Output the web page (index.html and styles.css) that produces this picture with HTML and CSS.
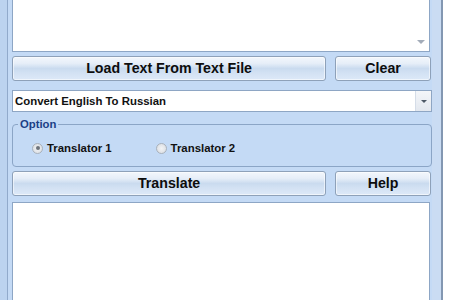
FILE: index.html
```html
<!DOCTYPE html>
<html>
<head>
<meta charset="utf-8">
<link rel="stylesheet" href="styles.css">
</head>
<body>
<div class="window">
  <div class="client">
    <div class="memo top-memo">
      <div class="memo-text"></div>
      <div class="vscroll"><span class="arrow-down"></span></div>
    </div>
    <div class="btn-row row-load">
      <button class="btn btn-wide">Load Text From Text File</button>
      <button class="btn btn-small">Clear</button>
    </div>
    <div class="combo">
      <span class="combo-text">Convert English To Russian</span>
      <span class="combo-btn"><span class="combo-arrow"></span></span>
    </div>
    <fieldset class="group">
      <legend>Option</legend>
      <div class="radios">
        <label class="radio checked"><span class="dot"></span>Translator 1</label>
        <label class="radio"><span class="dot"></span>Translator 2</label>
      </div>
    </fieldset>
    <div class="btn-row row-translate">
      <button class="btn btn-wide">Translate</button>
      <button class="btn btn-small">Help</button>
    </div>
    <div class="memo bottom-memo"></div>
  </div>
</div>
</body>
</html>
```
FILE: styles.css
```css
html, body {
  margin: 0;
  padding: 0;
  background: #ffffff;
  width: 450px;
  height: 300px;
  overflow: hidden;
}

.window {
  width: 443px;
  height: 300px;
  box-sizing: border-box;
  border-left: 7px solid #bcd3ef;
  border-right: 2px solid #8397b2;
  background: #cadcf3;
  display: flex;
}

.client {
  width: 425px;
  box-sizing: border-box;
  border-left: 1px solid #91aacb;
  background: #c4daf5;
  padding: 0 1px 0 4px;
  display: flex;
  flex-direction: column;
  font-family: "Liberation Sans", Arial, sans-serif;
  font-weight: bold;
  color: #111;
}

.memo {
  background: #fff;
  border: 1px solid #8da6c5;
  width: 418px;
  box-sizing: border-box;
}

.top-memo {
  height: 52px;
  border-top: none;
  display: flex;
  flex-shrink: 0;
}

.memo-text {
  flex: 1;
}

.vscroll {
  width: 17px;
  display: flex;
  align-items: flex-end;
  justify-content: center;
  padding-bottom: 7px;
  box-sizing: border-box;
}

.arrow-down {
  width: 0;
  height: 0;
  border-left: 4px solid transparent;
  border-right: 4px solid transparent;
  border-top: 4px solid #a3acb9;
}

.btn-row {
  display: flex;
  gap: 9px;
  flex-shrink: 0;
}

.row-load {
  margin-top: 4px;
}

.row-translate {
  margin-top: 4px;
}

.btn {
  height: 25px;
  box-sizing: border-box;
  border: 1px solid #8ea1b9;
  border-radius: 3px;
  background: linear-gradient(#f3f7fc 0%, #e6eef8 28%, #cadbef 50%, #d2e1f3 68%, #dde9f8 100%);
  font-family: "Liberation Sans", Arial, sans-serif;
  font-weight: bold;
  font-size: 14.2px;
  color: #0d0d0d;
  padding: 0;
  line-height: 23px;
  box-shadow: inset 0 0 0 1px rgba(255,255,255,0.55);
}

.btn-wide {
  width: 315px;
}

.btn-small {
  width: 96px;
}

.combo {
  margin-top: 9px;
  width: 420px;
  height: 22px;
  box-sizing: border-box;
  background: #fff;
  border: 1px solid #8ea6c4;
  display: flex;
  align-items: stretch;
  flex-shrink: 0;
}

.combo-text {
  flex: 1;
  font-size: 11.4px;
  line-height: 20px;
  padding-left: 2px;
}

.combo-btn {
  width: 15px;
  background: linear-gradient(#f4f6f9, #e3e8ef);
  border-left: 1px solid #d5dde8;
  display: flex;
  align-items: center;
  justify-content: center;
}

.combo-arrow {
  width: 0;
  height: 0;
  border-left: 3px solid transparent;
  border-right: 3px solid transparent;
  border-top: 3px solid #4d5866;
}

.group {
  margin: 5px 0 0 0;
  width: 420px;
  box-sizing: border-box;
  border: 1px solid #8ba5c6;
  border-radius: 4px;
  padding: 10px 0 11px 5px;
  flex-shrink: 0;
}

.group legend {
  padding: 0 2px;
  font-size: 11.3px;
  line-height: 14px;
  color: #1b3f86;
}

.radios {
  display: flex;
  align-items: center;
  padding-left: 14px;
  gap: 44px;
  height: 14px;
}

.radio {
  display: flex;
  align-items: center;
  gap: 4px;
  font-size: 11.4px;
  line-height: 14px;
}

.dot {
  width: 11px;
  height: 11px;
  border-radius: 50%;
  box-sizing: border-box;
  border: 1px solid #a9b1bb;
  background: radial-gradient(circle at 50% 50%, #f2f3f5 0%, #dfe2e6 70%, #cfd3d8 100%);
  position: relative;
}

.radio.checked .dot::after {
  content: "";
  position: absolute;
  left: 2.5px;
  top: 2.5px;
  width: 4px;
  height: 4px;
  border-radius: 50%;
  background: #6d737b;
}

.bottom-memo {
  margin-top: 6px;
  flex: 1;
  border-bottom: none;
}
```
